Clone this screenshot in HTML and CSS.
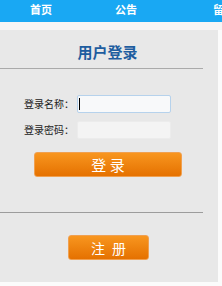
FILE: index.html
```html
<!DOCTYPE html>
<html lang="zh-CN">
<head>
<meta charset="utf-8">
<title>用户登录</title>
<link rel="stylesheet" href="styles.css">
</head>
<body>
<nav class="nav">
  <a class="nav-item">首页</a>
  <a class="nav-item">公告</a>
  <a class="nav-item">留言</a>
</nav>
<div class="band"></div>
<main class="panel">
  <h1 class="title">用户登录</h1>
  <div class="rule"></div>
  <div class="form">
    <div class="row">
      <span class="label">登录名称：</span>
      <div class="field focus"><span class="caret"></span></div>
    </div>
    <div class="row">
      <span class="label">登录密码：</span>
      <div class="field"></div>
    </div>
  </div>
  <button class="btn login">登 录</button>
  <div class="rule rule-2"></div>
  <button class="btn reg">注 册</button>
</main>
</body>
</html>
```
FILE: styles.css
```css
html, body {
  margin: 0;
  padding: 0;
  background: #fbfbfb;
  font-family: "Noto Sans CJK SC", "Liberation Sans", sans-serif;
  overflow: hidden;
}
.nav {
  height: 22px;
  background: #19a8f3;
  display: grid;
  grid-template-columns: 85px 98px auto;
  padding-left: 30px;
  white-space: nowrap;
  overflow: hidden;
}
.nav-item {
  color: #fff;
  font-size: 11px;
  font-weight: bold;
  line-height: 19px;
}
.band {
  height: 8px;
  background: #f5f5f5;
}
.panel {
  width: 218px;
  height: 252px;
  background: #e8e8e8;
  display: flex;
  flex-direction: column;
}
.title {
  margin: 0;
  padding-top: 12px;
  height: 26px;
  line-height: 20px;
  font-size: 15px;
  font-weight: bold;
  color: #1e5d9f;
  text-align: center;
  padding-right: 3px;
}
.rule {
  width: 203px;
  height: 1px;
  background: #aaaaaa;
}
.form {
  margin-top: 26px;
  display: flex;
  flex-direction: column;
  gap: 8px;
}
.row {
  display: flex;
  align-items: center;
}
.label {
  width: 74px;
  text-align: right;
  font-size: 10px;
  color: #222;
  line-height: 18px;
}
.field {
  margin-left: 3px;
  width: 94px;
  height: 18px;
  box-sizing: border-box;
  border: 1px solid #ececec;
  border-radius: 2px;
  background: #f4f4f4;
  display: flex;
  align-items: center;
  padding-left: 1px;
}
.field.focus {
  border-color: #b6d2ec;
  background: #f8f9fa;
}
.caret {
  width: 1px;
  height: 12px;
  background: #000;
}
.btn {
  display: block;
  height: 25px;
  box-sizing: border-box;
  border: 1px solid #f0a050;
  border-radius: 3px;
  background: linear-gradient(#f8961f, #e57100);
  color: #fff;
  font-family: "Noto Sans CJK SC", sans-serif;
  padding: 0;
  line-height: 22px;
}
.login {
  margin: 13px 0 0 34px;
  width: 148px;
  font-size: 15px;
}
.rule-2 {
  margin-top: 35px;
  background: #9c9c9c;
}
.reg {
  margin: 22px 0 0 68px;
  width: 81px;
  font-size: 14px;
  letter-spacing: 2px;
  padding-left: 2px;
}
```
